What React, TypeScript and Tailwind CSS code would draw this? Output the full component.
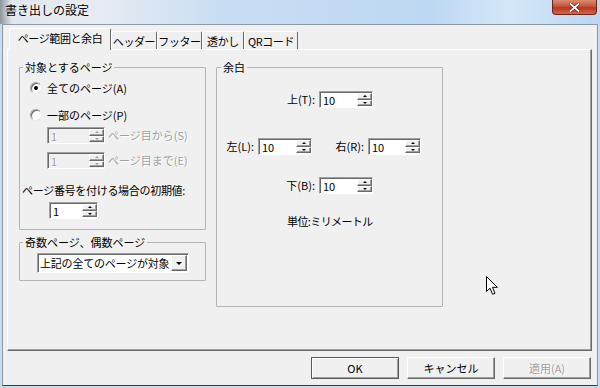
import React from 'react';

const raised =
  'border border-t-white border-l-white border-b-[#696969] border-r-[#696969] shadow-[inset_-1px_-1px_0_#a0a0a0]';
const sunken =
  'border border-t-[#a0a0a0] border-l-[#a0a0a0] border-b-white border-r-white shadow-[inset_1px_1px_0_#696969]';
const dim = 'text-[#a0a0a0] [text-shadow:1px_1px_0_#ffffff]';

const Up = ({ off }: { off?: boolean }) => (
  <span className={`border-x-[2px] border-x-transparent border-b-[2px] ${off ? 'border-b-[#a0a0a0]' : 'border-b-black'}`} />
);
const Down = ({ off }: { off?: boolean }) => (
  <span className={`border-x-[2px] border-x-transparent border-t-[2px] ${off ? 'border-t-[#a0a0a0]' : 'border-t-black'}`} />
);

interface SpinProps {
  value: string;
  className: string;
  disabled?: boolean;
}

const Spin: React.FC<SpinProps> = ({ value, className, disabled }) => (
  <div className={`flex h-[17px] ${sunken} ${disabled ? 'bg-[#f0f0f0]' : 'bg-white'} ${className}`}>
    <div className={`flex-1 flex items-center pl-[3px] pt-[1px] text-[11px] leading-none ${disabled ? dim : 'text-black'}`}>
      {value}
    </div>
    <div className="flex flex-col w-[15px] my-[1px]">
      <div className={`flex-1 flex items-center justify-center bg-[#f0f0f0] ${raised}`}>
        <Up off={disabled} />
      </div>
      <div className={`flex-1 flex items-center justify-center bg-[#f0f0f0] ${raised}`}>
        <Down off={disabled} />
      </div>
    </div>
  </div>
);

const Radio = ({ checked }: { checked?: boolean }) => (
  <span className="w-[12px] h-[12px] rounded-full bg-white border border-t-[#a0a0a0] border-l-[#a0a0a0] border-b-[#e8e8e8] border-r-[#e8e8e8] shadow-[inset_1px_1px_0_#696969] flex items-center justify-center">
    {checked && <span className="w-[4px] h-[4px] rounded-full bg-black" />}
  </span>
);

const tabs = [
  { label: 'ページ範囲と余白', w: 'w-[102px]', active: true },
  { label: 'ヘッダー', w: 'w-[46px]' },
  { label: 'フッター', w: 'w-[45px]' },
  { label: '透かし', w: 'w-[42px]' },
  { label: 'QRコード', w: 'w-[54px]' },
];

const groupBox = 'border border-[#b4b4b4] rounded-[1px]';
const legend = 'ml-[3px] px-[2px] text-[11px] leading-[16px]';

export default function App() {
  return (
    <div className="relative w-[600px] h-[388px] overflow-hidden flex flex-col bg-[#c7dcf1] text-black font-['Noto_Sans_CJK_JP','Noto_Sans',sans-serif]">
      {/* title bar */}
      <div className="h-[24px] shrink-0 flex items-start bg-[linear-gradient(90deg,#8e959c_0px,#dfe6ed_12px,#e6ecf2_100px,#c9def3_220px,#bdd8f2_430px,#d4e7f8_510px,#bad6f1_600px)]">
        <span className="ml-[5px] mt-[1px] text-[12px] leading-[18px] text-black [text-shadow:0_0_6px_#ffffff]">書き出しの設定</span>
        <button className="ml-auto mr-[3px] w-[45px] h-[15px] rounded-b-[4px] border border-t-0 border-[#6b271b] bg-[linear-gradient(180deg,#dc8a74_0%,#c7533c_45%,#b9361f_55%,#cb6a4f_100%)] flex items-center justify-center">
          <svg width="11" height="9" viewBox="0 0 11 9">
            <path d="M1.5 1 L9.5 8 M9.5 1 L1.5 8" stroke="#5a2016" strokeWidth="3.2" strokeLinecap="square" />
            <path d="M1.5 1 L9.5 8 M9.5 1 L1.5 8" stroke="#ffffff" strokeWidth="1.8" strokeLinecap="square" />
          </svg>
        </button>
      </div>

      {/* client */}
      <div className="flex-1 flex flex-col ml-[2px] mr-[2px] mb-[2px] bg-[#f0f0f0] border border-[#8d99a6] border-b-[#3a3a3a]">
        {/* tab strip */}
        <div className="flex items-end h-[24px] ml-[6px] pt-[3px]">
          {tabs.map(t => (
            <div
              key={t.label}
              className={`${t.w} shrink-0 flex items-center justify-center whitespace-nowrap tracking-[-0.4px] bg-[#f0f0f0] border-t border-l border-white border-r border-r-[#696969] rounded-t-[2px] text-[11px] leading-none ${
                t.active ? 'h-[22px] -mb-[1px] relative z-10 pb-[2px]' : 'h-[18px] pt-[1px]'
              }`}
            >
              {t.label}
            </div>
          ))}
        </div>

        {/* tab panel */}
        <div className={`h-[302px] ml-[4px] mr-[5px] ${raised} flex items-start pl-[11px] pt-[9px]`}>
          {/* left column */}
          <div className="w-[187px] flex flex-col">
            <fieldset className={`${groupBox} h-[171px]`}>
              <legend className={legend}>対象とするページ</legend>
              <div className="flex items-center ml-[10px] mt-[5px] h-[16px] gap-[5px] text-[11px]">
                <Radio checked />
                <span>全てのページ(A)</span>
              </div>
              <div className="flex items-center ml-[10px] mt-[11px] h-[16px] gap-[5px] text-[11px]">
                <Radio />
                <span>一部のページ(P)</span>
              </div>
              <div className="flex items-center ml-[27px] mt-[4px]">
                <Spin value="1" disabled className="w-[58px]" />
                <span className={`ml-[3px] text-[11px] leading-none ${dim}`}>ページ目から(S)</span>
              </div>
              <div className="flex items-center ml-[27px] mt-[8px]">
                <Spin value="1" disabled className="w-[58px]" />
                <span className={`ml-[3px] text-[11px] leading-none ${dim}`}>ページ目まで(E)</span>
              </div>
              <div className="ml-[2px] mt-[13px] text-[11px] leading-[16px] tracking-[-0.3px]">ページ番号を付ける場合の初期値:</div>
              <Spin value="1" className="w-[49px] ml-[29px] mt-[4px]" />
            </fieldset>

            <fieldset className={`${groupBox} h-[47px] mt-[4px]`}>
              <legend className={legend}>奇数ページ、偶数ページ</legend>
              <div className={`ml-[17px] mt-[3px] w-[152px] h-[20px] flex bg-white ${sunken}`}>
                <div className="flex-1 flex items-center pl-[2px] text-[11px] leading-none tracking-[-0.2px] whitespace-nowrap overflow-hidden">
                  上記の全てのページが対象
                </div>
                <div className={`w-[16px] my-[1px] mr-[1px] flex items-center justify-center bg-[#f0f0f0] ${raised}`}>
                  <span className="border-x-[3px] border-x-transparent border-t-[3px] border-t-black" />
                </div>
              </div>
            </fieldset>
          </div>

          {/* margins */}
          <fieldset className={`${groupBox} ml-[10px] w-[227px] h-[248px]`}>
            <legend className="ml-[4px] px-[2px] text-[11px] leading-[16px]">余白</legend>
            <div className="flex items-center mt-[16px] ml-[60px] text-[11px]">
              <span className="w-[38px] text-right mr-[4px]">上(T):</span>
              <Spin value="10" className="w-[54px]" />
            </div>
            <div className="flex items-center mt-[30px] ml-[2px] text-[11px]">
              <span className="w-[35px] text-right mr-[4px]">左(L):</span>
              <Spin value="10" className="w-[54px]" />
              <span className="w-[35px] text-right mr-[4px] ml-[17px]">右(R):</span>
              <Spin value="10" className="w-[53px]" />
            </div>
            <div className="flex items-center mt-[22px] ml-[60px] text-[11px]">
              <span className="w-[38px] text-right mr-[4px]">下(B):</span>
              <Spin value="10" className="w-[54px]" />
            </div>
            <div className="mt-[19px] ml-[70px] text-[11px] leading-[16px] tracking-[-0.6px]">単位:ミリメートル</div>
          </fieldset>
        </div>

        {/* buttons */}
        <div className="flex justify-end gap-[8px] mt-[6px] pr-[6px]">
          <button className="w-[88px] h-[22px] bg-[#f0f0f0] border border-[#5a5a5a] shadow-[inset_1px_1px_0_#ffffff,inset_-1px_-1px_0_#a0a0a0] text-[11px] leading-none">
            OK
          </button>
          <button className={`w-[88px] h-[22px] bg-[#f0f0f0] ${raised} text-[11px] leading-none`}>キャンセル</button>
          <button className={`w-[88px] h-[22px] bg-[#f0f0f0] ${raised} text-[11px] leading-none ${dim}`}>適用(A)</button>
        </div>
      </div>

      {/* mouse cursor */}
      <svg className="absolute left-[486px] top-[276px]" width="13" height="20" viewBox="0 0 13 20">
        <path d="M0.5 0.5 L0.5 15.5 L4 12.2 L6.6 18.3 L9 17.3 L6.5 11.3 L11.3 11.3 Z" fill="#ffffff" stroke="#000000" strokeWidth="1" strokeLinejoin="miter" />
      </svg>
    </div>
  );
}
